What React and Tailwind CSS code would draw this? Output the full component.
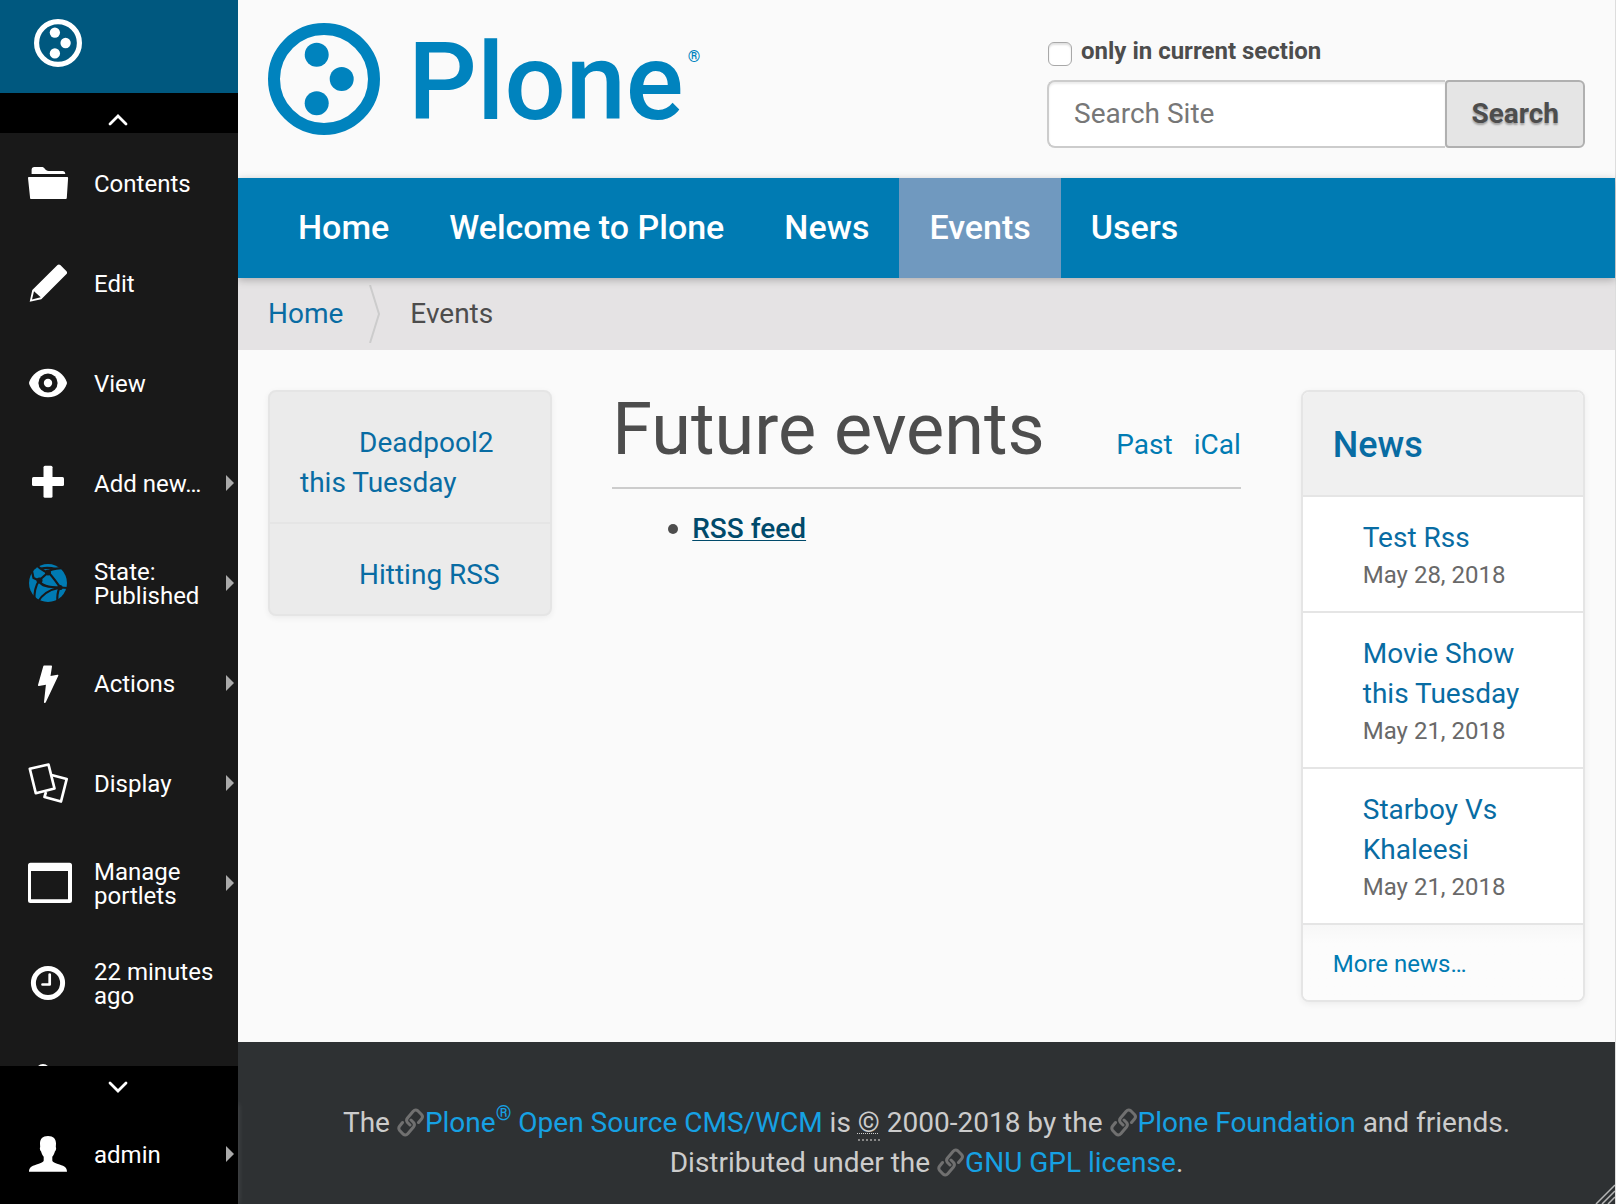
import React from "react";

function FolderIcon() {
  return (
    <svg viewBox="0 0 48 48" className="size-12" fill="currentColor" aria-hidden="true">
      <path d="M5.6 14.9V11c0-2 1-3 2.800-3h7.200c1.300 0 2 .4 2.800 1.300C19.800 11 20.800 12 22.800 12h13.700c1.700 0 2.800 1.100 2.800 2.900z" />
      <path d="M2.800 18h38.500c.6 0 .9.300.8.900L40.800 39c-.1.700-.4 1-1 1H5.100c-.6 0-1-.3-1-1L2 18.900c0-.6.200-.9.800-.9z" />
    </svg>
  );
}

function PencilIcon() {
  return (
    <svg viewBox="0 0 48 48" className="size-12" fill="currentColor" aria-hidden="true">
      <path
        fillRule="evenodd"
        d="M3.700 42.700 6.300 31 31.500 6c.8-.8 2-.8 2.800 0l6.200 6.200c.8.800.8 2 0 2.800L15.300 40.300zM8 32.200 6 40.400l8.700-2.100z"
      />
    </svg>
  );
}

function EyeIcon() {
  return (
    <svg viewBox="0 0 48 48" className="size-12" aria-hidden="true">
      <path
        fill="currentColor"
        d="M22 9.700C12.500 9.700 5.700 16 3.200 23c-.2.600-.2 1.400 0 2C5.700 32 12.500 38.300 22 38.300S38.300 32 40.800 25c.2-.6.200-1.400 0-2C38.300 16 31.500 9.700 22 9.700z"
      />
      <circle cx="22" cy="24" r="9.600" fill="#191919" />
      <circle cx="22" cy="24" r="4.200" fill="currentColor" />
    </svg>
  );
}

function PlusIcon() {
  return (
    <svg viewBox="0 0 48 48" className="size-12" fill="currentColor" aria-hidden="true">
      <rect x="6" y="18" width="32" height="9" rx="1.500" />
      <rect x="17.500" y="6.700" width="9" height="32" rx="1.500" />
    </svg>
  );
}

function GlobeIcon() {
  return (
    <svg viewBox="0 0 48 48" className="size-12" aria-hidden="true">
      <circle cx="22" cy="24" r="19" fill="#007bb3" />
      <g fill="none" stroke="#191919" strokeWidth="2.200">
        <path d="M13 21.500 L21.500 14" />
        <path d="M6 12 L7.500 19 L13 21.500" />
        <path d="M13 21.500 C9.500 27 8 32 8.500 41" />
        <path d="M13 21.500 C15 27 22 28.500 34 28.500" />
        <path d="M21.500 14 C18 11.500 14 10 11 6.500" />
        <path d="M21.500 13 C25 9.500 30 9.500 37 9" />
        <path d="M15 9.500 C20 8.500 24 8.500 30 10" />
        <path d="M22 13 C27 18 31 24 34 28" />
        <path d="M34 28.500 C22 31 15 37 12 43" />
        <path d="M34 28.500 L42 29" />
        <path d="M33.500 28.500 C31.500 33 31 38 31.500 43" />
      </g>
      <circle cx="13.500" cy="21.500" r="3" fill="#191919" />
      <circle cx="22" cy="13.500" r="3" fill="#191919" />
      <circle cx="34" cy="28.500" r="2.600" fill="#191919" />
    </svg>
  );
}

function BoltIcon() {
  return (
    <svg viewBox="0 0 48 48" className="size-12" fill="currentColor" aria-hidden="true">
      <path d="M17.200 7.500c.1-.6.400-.9 1-.9h7c.6 0 .9.300.8.900L24.500 17l6.900-1.200c.8-.1 1.100.3.900.9L19.800 43.300c-.5 1.100-1.900.9-1.800-.3l1.900-17.200-7 1.200c-.7.100-1-.2-.9-.9z" />
    </svg>
  );
}

function DisplayIcon() {
  return (
    <svg viewBox="0 0 48 48" className="size-12" fill="none" stroke="currentColor" strokeWidth="2.700" strokeLinejoin="round" aria-hidden="true">
      <path d="M3.800 9.700 L22.500 5.500 L28.500 29.500 L9.800 34.200z" />
      <path d="M25.500 16 L40.700 20 L35 42.500 L18.500 38 L20 33" />
    </svg>
  );
}

function WindowIcon() {
  return (
    <svg viewBox="0 0 48 48" className="size-12" fill="currentColor" aria-hidden="true">
      <path
        fillRule="evenodd"
        d="M4.500 3.700h39a2.500 2.500 0 0 1 2.500 2.500v35.300a2.500 2.500 0 0 1-2.500 2.500h-39a2.500 2.500 0 0 1-2.500-2.500V6.200a2.500 2.500 0 0 1 2.500-2.500zM5 12v28.300h37V12z"
      />
    </svg>
  );
}

function ClockIcon() {
  return (
    <svg viewBox="0 0 48 48" className="size-12" fill="none" stroke="currentColor" aria-hidden="true">
      <circle cx="22" cy="24" r="14.600" strokeWidth="5" />
      <path d="M23.700 15.500V25.500H16.500" strokeWidth="2.700" strokeLinecap="round" strokeLinejoin="round" />
    </svg>
  );
}

function UserIcon() {
  return (
    <svg viewBox="0 0 48 48" className="size-12" fill="currentColor" aria-hidden="true">
      <path d="M22 6c5.500 0 8 3 8 7.500 0 1.500-.2 2.500-.2 3.500.7.800.3 3.500-.9 4.500-.5 2-1.600 4-2.600 5.200v3.500c0 2 2.700 2.800 7.200 4.300C39 36.300 41 37.800 41 41.800H3c0-4 2-5.500 7.500-7.300 4.500-1.500 7.200-2.300 7.200-4.300v-3.500c-1-1.200-2.100-3.200-2.600-5.200-1.200-1-1.600-3.700-.9-4.500 0-1-.2-2-.2-3.500C14 9 16.500 6 22 6z" />
    </svg>
  );
}

function PloneMark({ className, stroke, dot }) {
  return (
    <svg viewBox="0 0 112 112" className={className} fill="currentColor" aria-hidden="true">
      <circle cx="56" cy="56" r={56 - stroke / 2} fill="none" stroke="currentColor" strokeWidth={stroke} />
      <circle cx="48.700" cy="31.700" r={dot} />
      <circle cx="73.700" cy="56" r={dot} />
      <circle cx="48.700" cy="80.300" r={dot} />
    </svg>
  );
}

function LinkIcon() {
  return (
    <svg viewBox="0 0 28 30" className="-my-1 inline-block h-[30px] w-7 align-[-2px]" fill="none" stroke="#707070" strokeWidth="3" strokeLinecap="round" strokeLinejoin="round" aria-hidden="true">
      <path d="M13 17 L10.500 14.500 C9.300 13 9.300 11.500 10.500 10 L16 3.500 C17.500 1.800 19.500 1.800 21 3 L24.500 6.500 C25.800 8 25.800 9.500 24.500 11 L21.500 14.500" />
      <path d="M14 12 L16.500 14.500 C17.700 16 17.700 17.500 16.500 19 L11 25.500 C9.500 27.200 7.500 27.200 6 26 L2.700 22.500 C1.500 21 1.500 19.500 2.700 18 L5.500 14.500" />
    </svg>
  );
}

const TOOLBAR = [
  { label: "Contents", Icon: FolderIcon },
  { label: "Edit", Icon: PencilIcon },
  { label: "View", Icon: EyeIcon },
  { label: "Add new…", Icon: PlusIcon, menu: true },
  { label: "State: Published", Icon: GlobeIcon, menu: true },
  { label: "Actions", Icon: BoltIcon, menu: true },
  { label: "Display", Icon: DisplayIcon, menu: true },
  { label: "Manage portlets", Icon: WindowIcon, menu: true },
  { label: "22 minutes ago", Icon: ClockIcon },
];

function ToolbarLink({ label, Icon, menu }) {
  return (
    <a href="#" className="flex h-[100px] shrink-0 items-center pl-[26px] pr-1 text-2xl leading-6 text-white">
      <Icon />
      <span className="ml-5 w-[124px] flex-none pt-0.5">{label}</span>
      {menu && (
        <svg viewBox="0 0 8 16" className="ml-auto h-4 w-2" fill="#aaaaaa" aria-hidden="true">
          <path d="M0 0 L8 8 L0 16z" />
        </svg>
      )}
    </a>
  );
}

function Toolbar() {
  return (
    <nav aria-label="Toolbar" className="sticky top-0 z-10 flex h-screen w-[238px] shrink-0 flex-col bg-[#191919]">
      <a href="#" aria-label="Plone Toolbar" className="flex h-[93px] shrink-0 bg-[#00587f] pl-[34px] pt-[19px] text-white">
        <PloneMark className="size-12" stroke={12} dot={12} />
      </a>
      <button type="button" aria-label="Scroll up" className="flex h-10 shrink-0 justify-center bg-black pr-0.5 pt-5 text-white">
        <svg viewBox="0 0 22 14" className="h-[14px] w-[22px]" fill="none" stroke="currentColor" strokeWidth="2.800" strokeLinecap="round">
          <path d="M3 11 L11 3 L19 11" />
        </svg>
      </button>
      <div className="flex min-h-0 flex-1 flex-col overflow-hidden">
        {TOOLBAR.map((item) => (
          <ToolbarLink key={item.label} {...item} />
        ))}
        <svg viewBox="0 0 48 48" className="ml-[26px] mt-[30px] size-12 shrink-0" aria-hidden="true">
          <circle cx="17" cy="8" r="7" fill="#ffffff" />
        </svg>
      </div>
      <button type="button" aria-label="Scroll down" className="relative z-10 flex h-[38px] shrink-0 justify-center bg-black pr-0.5 pt-[14px] text-white">
        <svg viewBox="0 0 22 14" className="h-[14px] w-[22px]" fill="none" stroke="currentColor" strokeWidth="2.800" strokeLinecap="round">
          <path d="M3 3 L11 11 L19 3" />
        </svg>
      </button>
      <div className="shrink-0 bg-black shadow-[0_0_6px_rgba(255,255,255,0.15)]">
        <ToolbarLink label="admin" Icon={UserIcon} menu />
      </div>
    </nav>
  );
}

function Header() {
  return (
    <header className="flex items-start justify-between px-[30px] pb-[30px]">
      <a href="#" aria-label="Plone" className="mt-[23px] flex h-[112px] items-start text-[#0083be]">
        <PloneMark className="size-[112px]" stroke={12} dot={12} />
        <span className="ml-7 text-[108px] font-medium leading-[118px]">Plone</span>
        <span className="ml-1 mt-[26px] text-base font-bold leading-4">®</span>
      </a>
      <form className="mt-9 w-[538px]" onSubmit={(e) => e.preventDefault()}>
        <div className="flex h-11 items-start">
          <input
            id="section"
            type="checkbox"
            className="ml-px mt-[6px] size-6 appearance-none rounded-md border border-[#a8a8a8] bg-white shadow-[inset_0_2px_2px_rgba(0,0,0,0.12)]"
          />
          <label htmlFor="section" className="ml-[9px] text-2xl font-bold leading-[30px]">
            only in current section
          </label>
        </div>
        <div className="flex">
          <input
            type="text"
            aria-label="Search Site"
            placeholder="Search Site"
            className="h-[68px] min-w-0 flex-1 rounded-l-lg border-2 border-r-0 border-[#cccccc] bg-white px-[25px] pb-0.5 shadow-[inset_0_2px_2px_rgba(0,0,0,0.075)] placeholder:text-[#777777]"
          />
          <button
            type="submit"
            className="h-[68px] rounded-r-md rounded-l border-2 border-[#b0b0b0] bg-[#e5e5e5] px-6 font-bold [text-shadow:0_2px_2px_rgba(0,0,0,0.3)]"
          >
            Search
          </button>
        </div>
      </form>
    </header>
  );
}

const NAV = ["Home", "Welcome to Plone", "News", "Events", "Users"];

const NEWS = [
  { title: "Test Rss", date: "May 28, 2018" },
  { title: "Movie Show this Tuesday", date: "May 21, 2018" },
  { title: "Starboy Vs Khaleesi", date: "May 21, 2018" },
];

function Content() {
  return (
    <div className="grid grid-cols-4 items-start pb-10 pt-10">
      <aside className="px-[30px]">
        <ul className="divide-y-2 divide-[#e5e5e5] rounded-lg border-2 border-[#e5e5e5] bg-[#ebebeb] shadow-[0_2px_6px_rgba(0,0,0,0.06)]">
          {["Deadpool2 this Tuesday", "Hitting RSS"].map((title) => (
            <li key={title} className="px-[30px] pb-[19px] pt-[31px] indent-[59px]">
              <a href="#" className="block text-[#086ca3]">{title}</a>
            </li>
          ))}
        </ul>
      </aside>
      <main className="col-span-2 px-[30px]">
        <div className="mb-5 flex items-baseline justify-between border-b-2 border-[#cccccc] pb-[18px]">
          <h1 className="text-7xl leading-[79px]">Future events</h1>
          <div className="flex gap-[21px] text-[#007bb3]">
            <a href="#">Past</a>
            <a href="#">iCal</a>
          </div>
        </div>
        <ul className="pl-14">
          <li className="flex items-center gap-[14px] before:size-[10px] before:rounded-full before:bg-[#4d4d4d]">
            <a href="#" className="font-medium text-[#004a6b] underline decoration-1 underline-offset-2">RSS feed</a>
          </li>
        </ul>
      </main>
      <aside className="px-[30px]">
        <section className="overflow-hidden rounded-lg border-2 border-[#e5e5e5] bg-white shadow-[0_2px_6px_rgba(0,0,0,0.06)]">
          <h2 className="bg-[#f0f0f0] px-[30px] pb-[30px] pt-[33px] text-4xl font-medium leading-10 text-[#086ca3]">
            <a href="#">News</a>
          </h2>
          <ul>
            {NEWS.map((n) => (
              <li key={n.title} className="border-t-2 border-[#e5e5e5] pb-[19px] pl-[60px] pr-[30px] pt-[21px]">
                <a href="#" className="block text-[#086ca3]">{n.title}</a>
                <time className="block text-2xl leading-[34px] text-[#696969]">{n.date}</time>
              </li>
            ))}
          </ul>
          <div className="border-t-2 border-[#e5e5e5] bg-linear-to-b from-[#f7f7f7] to-[#fcfcfc] to-25% px-[30px] pb-[19px] pt-[22px] text-2xl leading-[34px]">
            <a href="#" className="text-[#007bb3]">More news…</a>
          </div>
        </section>
      </aside>
    </div>
  );
}

function FooterLink({ children }) {
  return (
    <a href="#" className="text-[#16a1e3]">
      <LinkIcon />
      {children}
    </a>
  );
}

export default function App() {
  return (
    <div className="flex min-h-screen bg-[#dddddd] font-['Roboto',sans-serif] text-[28px] leading-10 text-[#4d4d4d]">
      <Toolbar />
      <div className="relative mr-px flex min-h-screen min-w-0 flex-1 flex-col bg-[#fafafa]">
        <Header />
        <nav aria-label="Sections" className="relative bg-[#007bb3] px-[30px] shadow-[0_2px_8px_rgba(0,0,0,0.25)]">
          <ul className="flex">
            {NAV.map((label) => (
              <li key={label}>
                <a
                  href="#"
                  aria-current={label === "Events" ? "page" : undefined}
                  className="block px-[30px] pb-0.5 text-[34px] font-medium leading-[98px] text-white aria-[current=page]:bg-[#7099bf]"
                >
                  {label}
                </a>
              </li>
            ))}
          </ul>
        </nav>
        <nav aria-label="Breadcrumbs" className="flex h-[72px] items-center bg-[#e5e3e4] px-[30px]">
          <a href="#" className="text-[#086ca3]">Home</a>
          <svg viewBox="0 0 12 58" className="ml-[26px] mr-[29px] h-[58px] w-3" fill="none" stroke="#cccccc" strokeWidth="2" aria-hidden="true">
            <path d="M1 0 L10 29 L1 58" />
          </svg>
          <span>Events</span>
        </nav>
        <Content />
        <footer className="flex-1 bg-[#2e3133] px-[30px] pt-[61px] text-center text-[#cccccc]">
          <p>
            The{" "}
            <FooterLink>
              Plone<sup className="relative -top-3 align-baseline text-xl leading-none">®</sup> Open Source CMS/WCM
            </FooterLink>{" "}
            is{" "}
            <abbr title="Copyright" className="border-b-2 border-dotted border-[#888888] underline decoration-dotted decoration-1">©</abbr>{" "}
            2000-2018 by the <FooterLink>Plone Foundation</FooterLink> and friends.
          </p>
          <p>
            Distributed under the <FooterLink>GNU GPL license</FooterLink>.
          </p>
        </footer>
        <svg viewBox="0 0 20 20" className="absolute bottom-0 right-0 size-5" stroke="#b5b5b5" strokeWidth="1.500" aria-hidden="true">
          <path d="M1 20 L20 1 M7 20 L20 7 M13 20 L20 13" />
        </svg>
      </div>
    </div>
  );
}
